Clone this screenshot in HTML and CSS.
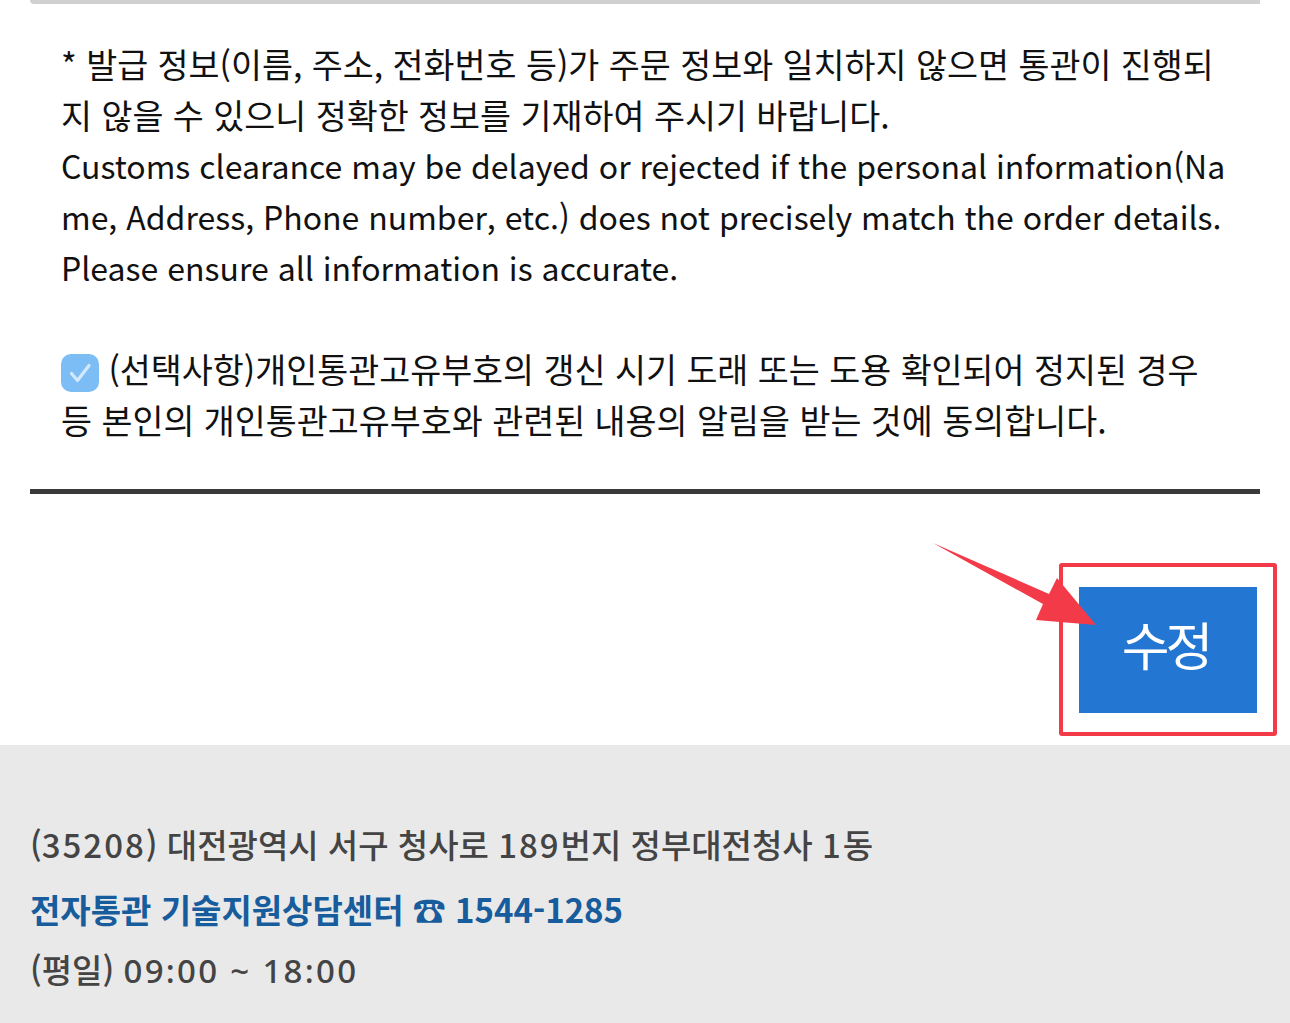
FILE: index.html
```html
<!DOCTYPE html>
<html lang="ko">
<head>
<meta charset="utf-8">
<title>수정</title>
<link rel="stylesheet" href="styles.css">
</head>
<body>
<div class="page">
  <div class="topbar"></div>
  <main class="content">
    <p class="notice">
      <span class="ln ko">* 발급 정보(이름, 주소, 전화번호 등)가 주문 정보와 일치하지 않으면 통관이 진행되</span>
      <span class="ln ko">지 않을 수 있으니 정확한 정보를 기재하여 주시기 바랍니다.</span>
      <span class="ln en">Customs clearance may be delayed or rejected if the personal information(Na</span>
      <span class="ln en">me, Address, Phone number, etc.) does not precisely match the order details.</span>
      <span class="ln en">Please ensure all information is accurate.</span>
    </p>
    <div class="agree">
      <span class="ln ko"><span class="check"><svg viewBox="0 0 38 38" width="38" height="38"><path d="M10.5 19.5 L16.5 26.5 L28 11.5" fill="none" stroke="#d3e9fc" stroke-width="3.2" stroke-linecap="round" stroke-linejoin="round"/></svg></span> (선택사항)개인통관고유부호의 갱신 시기 도래 또는 도용 확인되어 정지된 경우</span>
      <span class="ln ko">등 본인의 개인통관고유부호와 관련된 내용의 알림을 받는 것에 동의합니다.</span>
    </div>
    <div class="rule"></div>
    <div class="actions">
      <button class="btn-edit" type="button">수정</button>
    </div>
  </main>
  <footer class="footer">
    <p class="addr">(<span class="num">35208</span>) 대전광역시 서구 청사로 <span class="num">189</span>번지 정부대전청사 <span class="num">1</span>동</p>
    <p class="help">전자통관 기술지원상담센터 ☎ 1544-1285</p>
    <p class="hours">(평일) <span class="time">09:00 ~ 18:00</span></p>
    <p class="copy">Copyright ⓒ Korea Customs Service. All rights reserved.</p>
  </footer>
  <div class="highlight"></div>
  <svg class="arrow" width="1290" height="760" viewBox="0 0 1290 760">
    <polygon points="933,543 1043,604 1036,620 1096,625 1057,578 1049,594" fill="#f23a48"/>
  </svg>
</div>
</body>
</html>
```
FILE: styles.css
```css
html, body {
  margin: 0;
  padding: 0;
  background: #ffffff;
}
body {
  font-family: "Noto Sans CJK KR", "Noto Sans", sans-serif;
  color: #111111;
}
.page {
  position: relative;
  width: 1290px;
  height: 1023px;
  overflow: hidden;
}
.topbar {
  margin: 0 30px;
  height: 4px;
  background: #d0d0d0;
  border-radius: 0 0 0 6px;
}
.content {
  padding: 0 30px;
}
.notice {
  margin: 34px 0 0;
  padding-left: 31px;
  font-size: 32px;
  line-height: 51px;
}
.ln {
  display: block;
  white-space: nowrap;
}
.ko {
  font-size: 33.7px;
  letter-spacing: 0;
}
.en {
  font-size: 32px;
  letter-spacing: 0;
}
.agree {
  margin-top: 50px;
  padding-left: 31px;
  font-size: 32px;
  line-height: 51px;
}
.check {
  display: inline-block;
  width: 38px;
  height: 38px;
  border-radius: 10px;
  background: #7dbdf5;
  vertical-align: -9px;
}
.check svg {
  display: block;
}
.rule {
  margin-top: 44px;
  height: 5px;
  background: #3a3a3a;
}
.actions {
  display: flex;
  justify-content: flex-end;
  padding: 93px 3px 32px 0;
}
.btn-edit {
  width: 178px;
  height: 126px;
  border: none;
  border-radius: 0;
  background: #2377d3;
  color: #ffffff;
  font-family: "Noto Sans CJK KR", sans-serif;
  font-size: 52px;
  letter-spacing: -4px;
  padding: 0 5px 14px 0;
}
.footer {
  background: #e9e9e9;
  padding: 79px 30px 0;
  height: 300px;
}
.footer p {
  margin: 0;
  white-space: nowrap;
  line-height: 40px;
  font-size: 33px;
}
.num {
  letter-spacing: 2px;
}
.time {
  font-family: "Noto Sans", sans-serif;
  letter-spacing: 2.3px;
}
.addr {
  color: #444444;
  font-weight: 500;
}
.help {
  margin-top: 25px !important;
  color: #175c9c;
  font-weight: 700;
}
.hours {
  margin-top: 20px !important;
  color: #444444;
  font-weight: 500;
}
.copy {
  margin-top: 30px !important;
  color: #444444;
  font-size: 28px !important;
}
.highlight {
  position: absolute;
  left: 1059px;
  top: 563px;
  width: 210px;
  height: 165px;
  border: 4px solid #f23a48;
  border-radius: 3px;
}
.arrow {
  position: absolute;
  left: 0;
  top: 0;
  pointer-events: none;
}
```
